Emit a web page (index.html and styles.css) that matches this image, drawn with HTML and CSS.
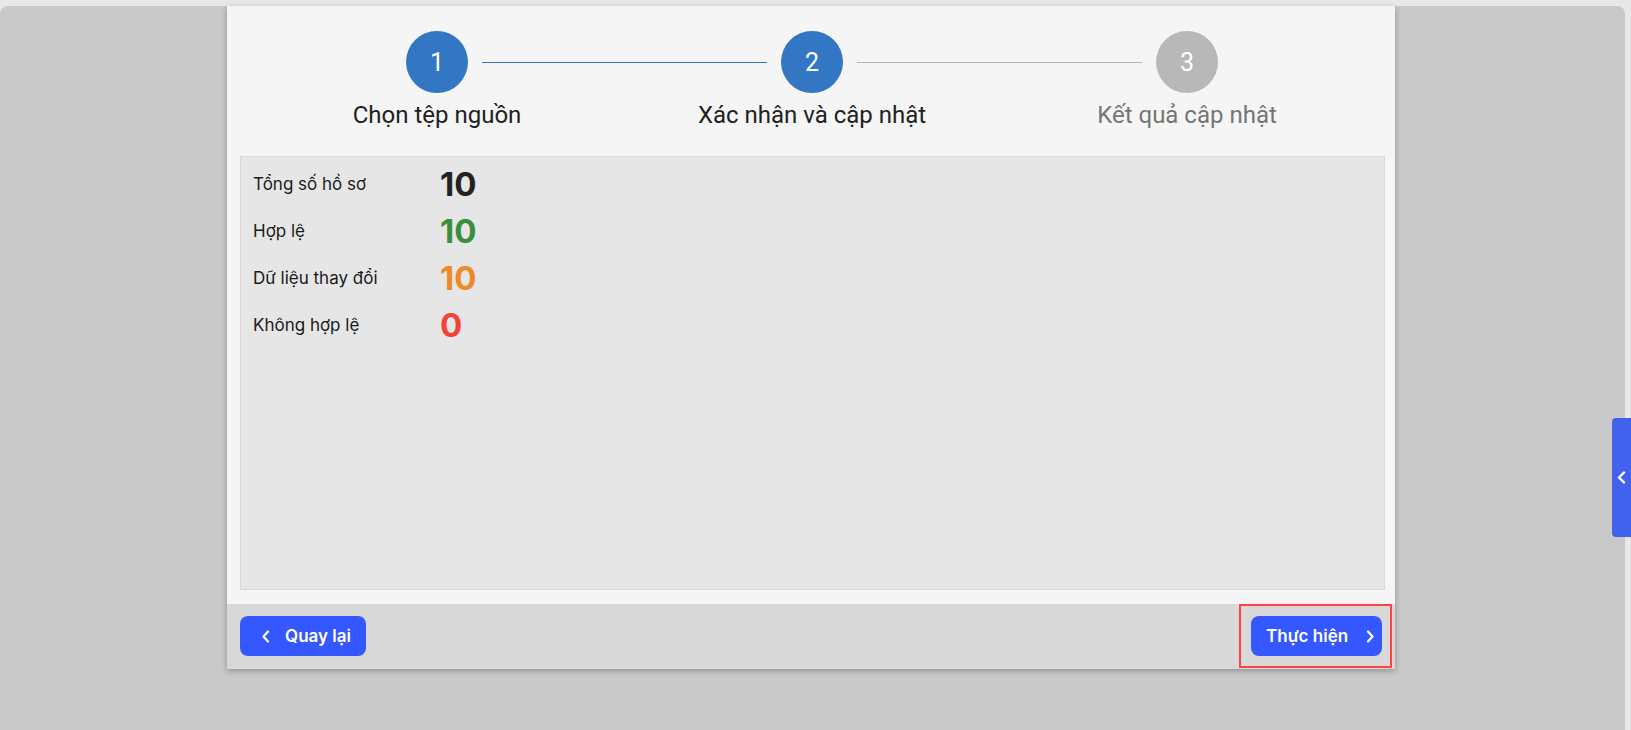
FILE: index.html
```html
<!DOCTYPE html>
<html lang="vi">
<head>
<meta charset="utf-8">
<title>Cập nhật hồ sơ</title>
<link rel="stylesheet" href="styles.css">
</head>
<body>
<div class="screen">
  <div class="modal">
    <div class="stepper">
      <div class="step done">
        <div class="step-track">
          <span class="line hidden"></span>
          <span class="circle">1</span>
          <span class="line blue"></span>
        </div>
        <div class="step-label">Chọn tệp nguồn</div>
      </div>
      <div class="step active">
        <div class="step-track">
          <span class="line blue"></span>
          <span class="circle">2</span>
          <span class="line gray"></span>
        </div>
        <div class="step-label">Xác nhận và cập nhật</div>
      </div>
      <div class="step pending">
        <div class="step-track">
          <span class="line gray"></span>
          <span class="circle">3</span>
          <span class="line hidden"></span>
        </div>
        <div class="step-label">Kết quả cập nhật</div>
      </div>
    </div>

    <div class="summary">
      <div class="row"><span class="label">Tổng số hồ sơ</span><span class="value total">10</span></div>
      <div class="row"><span class="label">Hợp lệ</span><span class="value valid">10</span></div>
      <div class="row"><span class="label">Dữ liệu thay đổi</span><span class="value changed">10</span></div>
      <div class="row"><span class="label">Không hợp lệ</span><span class="value invalid">0</span></div>
    </div>

    <div class="footer">
      <button class="btn btn-back">
        <svg class="chev" width="8" height="13" viewBox="0 0 8 13"><polyline points="6,1.5 1.5,6.5 6,11.5" fill="none" stroke="#fff" stroke-width="2.2" stroke-linecap="round" stroke-linejoin="round"/></svg>
        <span>Quay lại</span>
      </button>
      <div class="highlight">
        <button class="btn btn-next">
          <span>Thực hiện</span>
          <svg class="chev" width="8" height="13" viewBox="0 0 8 13"><polyline points="2,1.5 6.5,6.5 2,11.5" fill="none" stroke="#fff" stroke-width="2.2" stroke-linecap="round" stroke-linejoin="round"/></svg>
        </button>
      </div>
    </div>
  </div>
</div>
<div class="side-tab">
  <svg width="9" height="13" viewBox="0 0 9 13"><polyline points="7,1.5 2,6.5 7,11.5" fill="none" stroke="#fff" stroke-width="2.4" stroke-linecap="round" stroke-linejoin="round"/></svg>
</div>
</body>
</html>
```

FILE: styles.css
```css
html, body {
  margin: 0;
  padding: 0;
}
body {
  background: #e8e8e8;
  width: 1631px;
  height: 730px;
  overflow: hidden;
  font-family: Inter, "Noto Sans", sans-serif;
}
.screen {
  margin-top: 6px;
  width: 1625px;
  height: 724px;
  background: #c9c9c9;
  border-radius: 8px 8px 0 0;
  padding-left: 227px;
  box-sizing: border-box;
}
.modal {
  width: 1168px;
  height: 663px;
  background: #f5f5f5;
  box-shadow: 0 2px 6px rgba(0, 0, 0, 0.28);
  display: flex;
  flex-direction: column;
}
.stepper {
  height: 150px;
  box-sizing: border-box;
  padding: 25px 0 0 2px;
  display: grid;
  grid-template-columns: repeat(3, 375px);
  justify-content: center;
}
.step {
  display: flex;
  flex-direction: column;
  align-items: center;
}
.step-track {
  width: 100%;
  display: flex;
  align-items: center;
}
.line {
  flex: 1;
  height: 1px;
}
.line.blue { background: #3276c4; }
.line.gray { background: #b5b5b5; }
.line.hidden { background: transparent; }
.circle {
  width: 62px;
  height: 62px;
  border-radius: 50%;
  margin: 0 14px;
  display: flex;
  align-items: center;
  justify-content: center;
  background: #3276c4;
  color: #fff;
  font-family: Roboto, "Liberation Sans", sans-serif;
  font-size: 25px;
  flex: none;
}
.pending .circle { background: #b8b8b8; }
.step-label {
  margin-top: 8px;
  font-family: Roboto, "Liberation Sans", sans-serif;
  font-size: 24px;
  line-height: 28px;
  color: #212121;
}
.pending .step-label { color: #757575; }

.summary {
  margin: 0 10px 0 13px;
  height: 434px;
  box-sizing: border-box;
  border: 1px solid #d9d9d9;
  background: #e6e6e6;
  padding: 3px 12px 0;
}
.row {
  height: 47px;
  display: flex;
  align-items: center;
}
.label {
  width: 187px;
  font-size: 17px;
  color: #1a1a1a;
}
.value {
  font-size: 33px;
  font-weight: 700;
  line-height: 40px;
}
.value.total { color: #222222; }
.value.valid { color: #3a8f3e; }
.value.changed { color: #ee8a28; }
.value.invalid { color: #f44336; }

.footer {
  margin-top: 14px;
  height: 65px;
  background: #d8d8d8;
  display: flex;
  justify-content: space-between;
  align-items: flex-start;
  padding: 0 3px 0 13px;
}
.btn {
  height: 40px;
  border: none;
  border-radius: 8px;
  background: #3557ff;
  color: #fff;
  font-family: Inter, "Noto Sans", sans-serif;
  font-size: 17px;
  font-weight: 600;
  display: flex;
  align-items: center;
  cursor: pointer;
}
.btn-back {
  margin-top: 12px;
  width: 126px;
  padding: 0 0 0 22px;
  gap: 15px;
}
.btn-next {
  width: 131px;
  padding: 0 0 0 15px;
  gap: 18px;
}
.chev { flex: none; }
.highlight {
  border: 2px solid #ff4343;
  padding: 10px 8px 10px 10px;
}
.side-tab {
  position: absolute;
  right: 0;
  top: 418px;
  width: 19px;
  height: 119px;
  background: #4262ee;
  border-radius: 4px 0 0 4px;
  display: flex;
  align-items: center;
  justify-content: center;
}
```
